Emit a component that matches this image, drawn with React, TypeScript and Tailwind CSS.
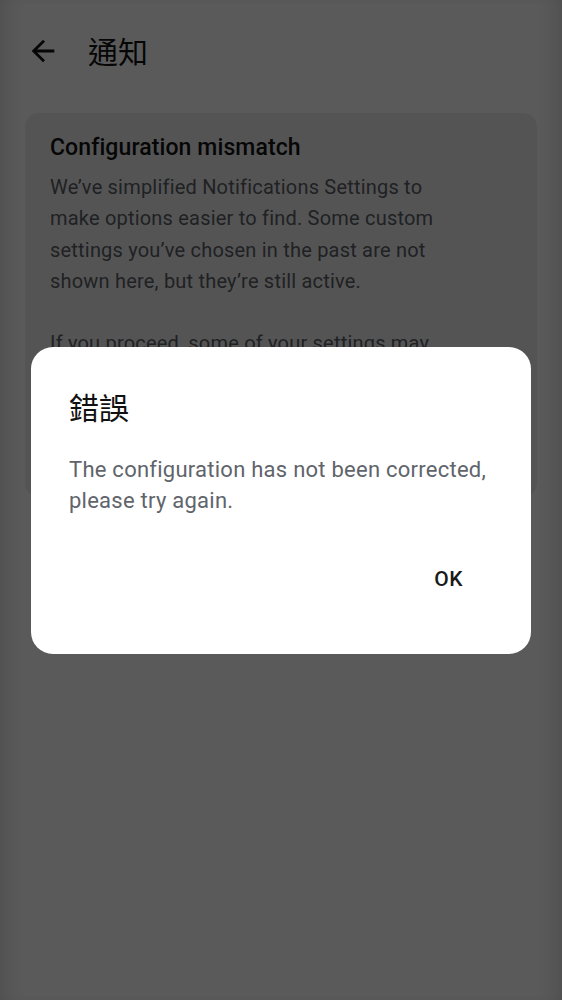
import React from 'react';

const font = { fontFamily: 'Roboto, "Noto Sans CJK TC", sans-serif' };

function BackIcon() {
    return (
        <svg width="34" height="34" viewBox="0 0 24 24" fill="#111">
            <path d="M20 11H7.83l5.59-5.59L12 4l-8 8 8 8 1.41-1.41L7.83 13H20v-2z" />
        </svg>
    );
}

export default function App() {
    return (
        <div className="relative w-[562px] h-[1000px] overflow-hidden bg-white" style={font}>
            {/* page under the scrim */}
            <div className="flex items-center h-[102px] pl-[26px]">
                <BackIcon />
                <span className="ml-[28px] text-[30px] leading-[40px] mt-[4px] text-[#111]">通知</span>
            </div>
            <div className="mx-[25px] mt-[11px] h-[384px] rounded-[14px] bg-[#eeeff1] pl-[25px] pr-[62px] pt-[20px] overflow-hidden">
                <h3 className="text-[23px] font-medium text-[#111] leading-[30px] tracking-[0.1px]">Configuration mismatch</h3>
                <p className="mt-[9px] text-[20px] leading-[31.3px] text-[#5b5e63] tracking-[0.2px]">
                    We’ve simplified Notifications Settings to make options easier to find. Some custom settings you’ve chosen in the past are not shown here, but they’re still active.
                </p>
                <p className="mt-[31px] text-[20px] leading-[31.3px] text-[#5b5e63] tracking-[0.2px]">
                    If you proceed, some of your settings may change and can’t be restored.
                </p>
            </div>

            {/* scrim */}
            <div className="absolute inset-0 bg-black/[0.647] shadow-[inset_18px_0_18px_-12px_rgba(0,0,0,0.12),inset_-18px_0_18px_-12px_rgba(0,0,0,0.12)] flex items-center justify-center">
                <div className="w-[500px] h-[307px] bg-white rounded-[22px] flex flex-col pl-[38px] pr-[30px]">
                    <h2 className="mt-[43px] text-[30px] leading-[38px] text-[#111]">錯誤</h2>
                    <p className="mt-[26px] text-[22px] leading-[31px] text-[#60646b] tracking-[0.25px]">
                        The configuration has not been corrected, please try again.
                    </p>
                    <div className="flex justify-end mt-auto mb-[58px]">
                        <button className="text-[21px] font-medium text-[#1a1a1a] mr-[38px] tracking-[0.5px]">OK</button>
                    </div>
                </div>
            </div>
        </div>
    );
}
